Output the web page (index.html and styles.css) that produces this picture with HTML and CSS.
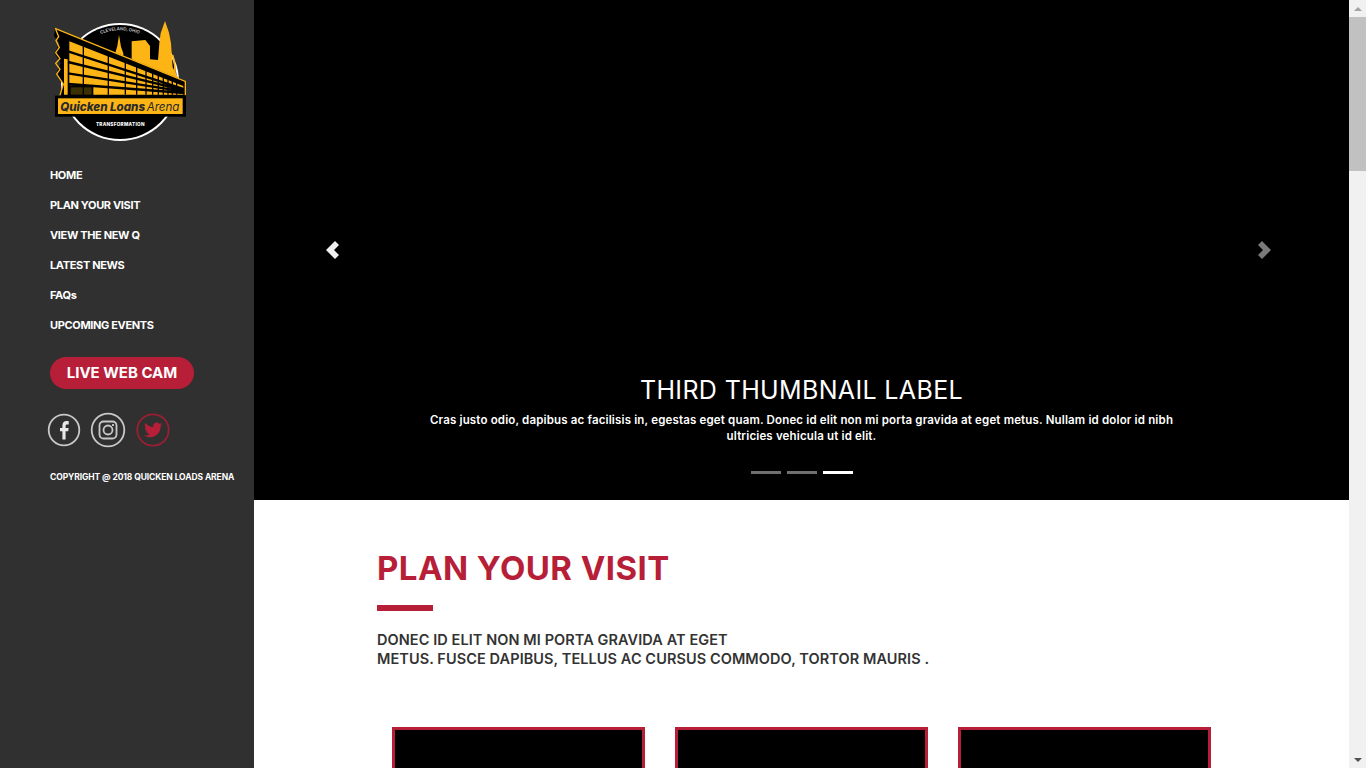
FILE: index.html
```html
<!DOCTYPE html>
<html lang="en">
<head>
<meta charset="utf-8">
<title>Quicken Loans Arena Transformation</title>
<link rel="stylesheet" href="styles.css">
</head>
<body>
<div class="app">
  <aside class="sidebar">
    <svg class="logo" viewBox="0 0 480 420" aria-label="Quicken Loans Arena Transformation">
      <circle cx="240" cy="216" r="177" fill="#fff"/>
      <circle cx="240" cy="216" r="171" fill="#000"/>
      <path d="M398 135 A165 165 0 0 1 404 200" fill="none" stroke="#fdb515" stroke-width="5"/>
      <path fill="#fdb515" d="M237 75 L243 110 L250 130 L250 150 L224 150 L226 128 L232 108Z M275 94 L316 90 L330 108 L330 148 L354 150 L358 100 L362 70 L375 33 L387 68 L393 100 L398 172 L416 206 L420 240 L300 240 L275 170Z"/>
      <path fill="#000" d="M45 54 L438 214 L438 262 L58 262 L70 222 L48 192 L62 160 L44 130 L58 100 L42 78Z"/>
      <path fill="#fdb515" d="M88 94 L430 228 L430 254 L160 254 L160 226 L88 226Z M72 146 L83 148 L83 254 L72 254Z"/>
      <path fill="#3a3000" d="M92 232 H155 V254 H92Z"/>
      <g fill="none" stroke="#000" stroke-width="7">
        <path d="M84 124 L434 238 M84 156 L434 241 M84 190 L434 245 M84 222 L434 249"/>
      </g>
      <g fill="none" stroke="#000" stroke-width="4">
        <path d="M130 105 V254 M205 135 V254 M256 155 V254 M290 170 V254 M318 182 V254 M338 190 V254 M355 197 V254 M370 203 V254 M384 208 V254 M397 213 V254 M410 218 V254"/>
      </g>
      <path fill="none" stroke="#fdb515" stroke-width="4" d="M45 55 L436 214 L436 256 M47 58 L56 80 L48 92 L58 112 L47 128 L60 146 L47 160 L60 178 L50 192 L70 222 L60 256"/>
      <rect x="45" y="257" width="393" height="63" fill="#000"/>
      <rect x="54" y="265" width="374" height="47" fill="#fdb515"/>
      <text class="logo-name" x="61" y="302">Quicken Loans<tspan class="logo-arena" dx="5">Arena</tspan></text>
      <text class="logo-sub" x="241" y="347" text-anchor="middle">TRANSFORMATION</text>
      <path id="logo-arc" d="M170 78 A150 150 0 0 1 310 78" fill="none"/>
      <text class="logo-city"><textPath href="#logo-arc" startOffset="50%" text-anchor="middle">CLEVELAND, OHIO</textPath></text>
    </svg>
    <nav class="nav">
      <a href="#">HOME</a>
      <a href="#">PLAN YOUR VISIT</a>
      <a href="#">VIEW THE NEW Q</a>
      <a href="#">LATEST NEWS</a>
      <a href="#">FAQs</a>
      <a href="#">UPCOMING EVENTS</a>
    </nav>
    <a class="cam" href="#">LIVE WEB CAM</a>
    <div class="social">
      <svg class="soc soc-f" viewBox="0 0 34 34"><circle cx="17" cy="17" r="15.3"/><path class="fill" d="M18.6 26.5 V18.2 H21.2 L21.6 15 H18.6 V13 C18.6 12 18.9 11.4 20 11.4 H21.7 V8.2 C21.4 8.2 20.5 8.1 19.5 8.1 C17.3 8.1 15.4 9.6 15.4 12.5 V15 H13 V18.2 H15.4 V26.5Z"/></svg>
      <svg class="soc soc-i" viewBox="0 0 36 36"><circle cx="18" cy="18" r="16.3"/><rect x="9.5" y="9.5" width="17" height="17" rx="4"/><circle cx="18" cy="18" r="4.5"/><circle class="fill" cx="23" cy="13" r="1"/></svg>
      <svg class="soc soc-t" viewBox="0 0 34 34"><circle cx="17" cy="17" r="15.7"/><path class="fill" d="M26.5 11.4 C25.8 11.7 25.1 11.9 24.3 12 C25.1 11.5 25.7 10.8 26 9.9 C25.2 10.4 24.4 10.7 23.5 10.9 C22.8 10.1 21.8 9.6 20.7 9.6 C18.5 9.6 16.8 11.4 17.2 13.9 C14 13.8 11.2 12.2 9.3 9.9 C8.3 11.6 8.8 13.8 10.5 14.9 C9.9 14.9 9.3 14.7 8.7 14.4 C8.7 16.2 10 17.8 11.8 18.2 C11.3 18.3 10.7 18.4 10.1 18.3 C10.6 19.8 12 20.9 13.7 20.9 C12.1 22.2 10.1 22.8 8 22.5 C9.7 23.6 11.7 24.2 13.9 24.2 C20.9 24.2 24.9 18.2 24.7 12.9 C25.4 12.5 26 11.9 26.5 11.4Z"/></svg>
    </div>
    <p class="copy">COPYRIGHT @ 2018 QUICKEN LOADS ARENA</p>
  </aside>
  <main class="main">
    <section class="carousel">
      <svg class="arrow arrow-prev" viewBox="0 0 16 20"><path d="M10 1 L14 5 L9 10 L14 15 L10 19 L1 10Z"/></svg>
      <svg class="arrow arrow-next" viewBox="0 0 16 20"><path d="M6 1 L2 5 L7 10 L2 15 L6 19 L15 10Z"/></svg>
      <div class="caption">
        <h3>THIRD THUMBNAIL LABEL</h3>
        <p>Cras justo odio, dapibus ac facilisis in, egestas eget quam. Donec id elit non mi porta gravida at eget metus. Nullam id dolor id nibh ultricies vehicula ut id elit.</p>
      </div>
      <div class="dots"><span></span><span></span><span class="on"></span></div>
    </section>
    <section class="visit">
      <h1>PLAN YOUR VISIT</h1>
      <div class="rule"></div>
      <p class="lead">DONEC ID ELIT NON MI PORTA GRAVIDA AT EGET<br>METUS. FUSCE DAPIBUS, TELLUS AC CURSUS COMMODO, TORTOR MAURIS .</p>
      <div class="cards"><div class="card"></div><div class="card"></div><div class="card"></div></div>
    </section>
  </main>
  <div class="scrollbar">
    <div class="sb-btn"><span class="tri-up"></span></div>
    <div class="sb-track"><div class="sb-thumb"></div></div>
    <div class="sb-btn"><span class="tri-down"></span></div>
  </div>
</div>
</body>
</html>
```
FILE: styles.css
```css
* { box-sizing: border-box; }
html, body { margin: 0; height: 100%; overflow: hidden; background: #fff; }
body { font-family: Inter, "Liberation Sans", sans-serif; }
.app { display: flex; width: 1366px; height: 768px; overflow: hidden; }

.sidebar { width: 254px; flex: none; background: #303030; padding: 10px 0 0 40px; color: #fff; }
.logo { display: block; width: 160px; height: 140px; }
.logo-name { font: italic 800 35px Inter, sans-serif; fill: #2a2a2a; letter-spacing: -0.2px; }
.logo-arena { font-weight: 400; }
.logo-sub { font: 800 14px Inter, sans-serif; fill: #fff; letter-spacing: .8px; }
.logo-city { font: 600 13px Inter, sans-serif; fill: #ccc; }

.nav { display: flex; flex-direction: column; margin: 10px 0 0 10px; }
.nav a { height: 30px; line-height: 30px; color: #fff; text-decoration: none; font-size: 11px; font-weight: 700; letter-spacing: -.35px; }
.cam { display: block; width: 144px; height: 32px; margin: 17px 0 0 10px; border-radius: 16px; background: #b71e37; color: #fff; text-decoration: none; font-size: 15px; font-weight: 700; line-height: 32px; text-align: center; }
.social { display: flex; align-items: center; margin: 23px 0 0 7px; gap: 9px; }
.soc { display: block; fill: none; stroke: #c8c8c8; stroke-width: 1.8; }
.soc .fill { fill: #e8e8e8; stroke: none; }
.soc-f { width: 34px; height: 34px; }
.soc-i { width: 36px; height: 36px; }
.soc-t { width: 34px; height: 34px; margin-left: 1px; stroke: #9a1f33; }
.soc-t .fill { fill: #b71e37; }
.copy { margin: 24px 0 0 10px; font-size: 8.5px; font-weight: 700; letter-spacing: -.1px; white-space: nowrap; }

.main { flex: none; width: 1095px; }
.carousel { position: relative; height: 500px; background: #000; color: #fff; }
.arrow { position: absolute; top: 240px; width: 16px; height: 20px; }
.arrow-prev { left: 71px; fill: #f0f0f0; }
.arrow-next { left: 1002px; fill: #7a7a7a; }
.caption { position: absolute; left: 164px; right: 164px; top: 374px; text-align: center; }
.caption h3 { margin: 0; font-size: 25px; font-weight: 400; line-height: 33px; letter-spacing: .35px; }
.caption p { margin: 5px 0 0; font-size: 11.5px; font-weight: 600; line-height: 16px; letter-spacing: .16px; }
.dots { position: absolute; left: 497px; top: 471px; display: flex; gap: 6px; }
.dots span { width: 30px; height: 3px; background: #6f6f6f; }
.dots .on { background: #fff; }

.visit { padding: 48px 0 0 123px; }
.visit h1 { margin: 0; color: #b71e37; font-size: 33px; font-weight: 700; line-height: 40px; letter-spacing: .43px; }
.rule { width: 56px; height: 6px; margin-top: 17px; background: #b71e37; }
.lead { margin: 19px 0 0; color: #333; font-size: 14.5px; font-weight: 600; line-height: 19px; letter-spacing: .08px; }
.cards { display: grid; grid-template-columns: repeat(3, 253px); gap: 30px; margin: 59px 0 0 15px; }
.card { height: 200px; background: #000; border: 3px solid #b71e37; }

.scrollbar { flex: none; width: 17px; display: flex; flex-direction: column; background: #f1f1f1; }
.sb-btn { height: 17px; flex: none; display: flex; align-items: center; justify-content: center; }
.tri-up { width: 0; height: 0; border: 4px solid transparent; border-top: 0; border-bottom: 4px solid #a3a3a3; }
.tri-down { width: 0; height: 0; border: 4px solid transparent; border-bottom: 0; border-top: 4px solid #505050; }
.sb-track { flex: 1; }
.sb-thumb { height: 154px; background: #c1c1c1; }
```
